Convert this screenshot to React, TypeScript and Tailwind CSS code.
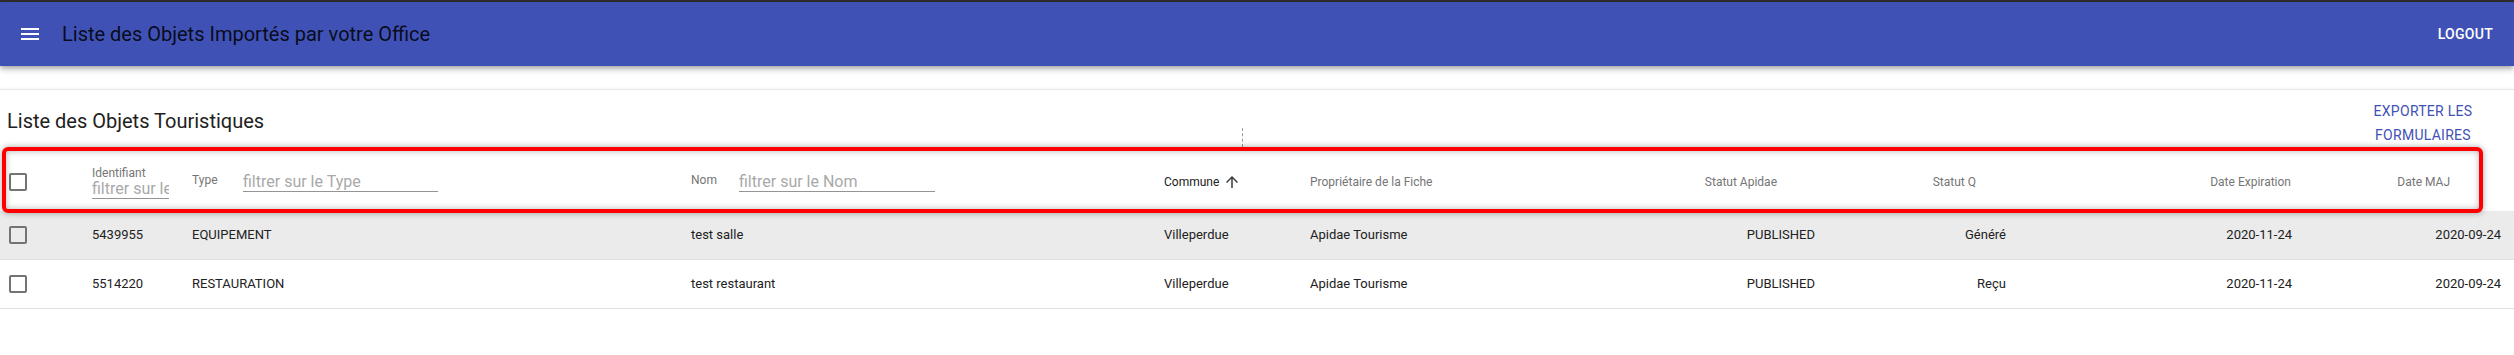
import React from "react";

const cols =
  "grid grid-cols-[92px_100px_499px_473px_146px_390px_115px_191px_286px_209px] pr-[13px]";

function Box() {
  return <div className="ml-[9px] h-[18px] w-[18px] rounded-[2px] border-2 border-[#737373]" />;
}

function Filter({ w, ph }: { w: string; ph: string }) {
  return (
    <input
      readOnly
      placeholder={ph}
      className={`${w} h-[19px] border-b border-[#949494] bg-transparent text-[16px] leading-[18px] text-[#212121] outline-none placeholder:text-[#a9a9a9]`}
    />
  );
}

const rows = [
  {
    id: "5439955",
    type: "EQUIPEMENT",
    nom: "test salle",
    commune: "Villeperdue",
    prop: "Apidae Tourisme",
    apidae: "PUBLISHED",
    q: "Généré",
    exp: "2020-11-24",
    maj: "2020-09-24",
    bg: "bg-[#ebebeb]",
  },
  {
    id: "5514220",
    type: "RESTAURATION",
    nom: "test restaurant",
    commune: "Villeperdue",
    prop: "Apidae Tourisme",
    apidae: "PUBLISHED",
    q: "Reçu",
    exp: "2020-11-24",
    maj: "2020-09-24",
    bg: "bg-white",
  },
];

export default function App() {
  return (
    <div className="h-[355px] w-full overflow-hidden bg-white font-['Roboto',sans-serif]">
      <div className="h-[2px] bg-[#2e2e2e]" />
      <header className="relative z-10 flex h-[64px] items-center bg-[#3f51b5] pl-[18px] pr-[21px] shadow-[0_2px_4px_-1px_rgba(0,0,0,0.2),0_4px_5px_0_rgba(0,0,0,0.14),0_1px_10px_0_rgba(0,0,0,0.12)]">
        <svg width="24" height="24" viewBox="0 0 24 24" fill="#ffffff">
          <path d="M3 18h18v-2H3v2zm0-5h18v-2H3v2zm0-7v2h18V6H3z" />
        </svg>
        <h1 className="ml-[20px] text-[20px] font-normal leading-[24px] text-black/[0.87]">
          Liste des Objets Importés par votre Office
        </h1>
        <span className="ml-auto text-[14px] font-medium uppercase leading-[20px] tracking-[0.02em] text-white">
          Logout
        </span>
      </header>

      <div className="mt-[23px] border-t border-[#e8e8e8] shadow-[0_-1px_2px_rgba(0,0,0,0.04)]">
        <div className="flex h-[57px]">
          <div className="w-[1242px] pl-[7px] pt-[19px]">
            <h2 className="text-[20px] font-normal leading-[24px] text-[#212121]">
              Liste des Objets Touristiques
            </h2>
          </div>
          <div className="mt-[38px] h-[19px] border-l border-dashed border-[#9a9a9a]" />
          <div className="flex-1" />
          <div className="mr-[31px] mt-[9px] w-[120px] text-center text-[14px] font-normal uppercase leading-[24px] tracking-[0.02em] text-[#3f51b5]">
            Exporter les
            <br />
            formulaires
          </div>
        </div>

        <div className="relative">
          <div className={`${cols} h-[64px] items-center pt-[6px] text-[12px] leading-[14px] text-[#757575]`}>
            <div>
              <Box />
            </div>
            <div className="flex flex-col">
              <span className="text-[12px] leading-[14px] text-[#767676]">Identifiant</span>
              <Filter w="w-[77px]" ph="filtrer sur le Identifiant" />
            </div>
            <div className="flex items-center">
              <span className="mb-[4px] w-[51px]">Type</span>
              <Filter w="w-[195px]" ph="filtrer sur le Type" />
            </div>
            <div className="flex items-center">
              <span className="mb-[4px] w-[48px]">Nom</span>
              <Filter w="w-[196px]" ph="filtrer sur le Nom" />
            </div>
            <div className="flex items-center text-[#212121]">
              <span>Commune</span>
              <svg className="ml-[4px]" width="18" height="18" viewBox="0 0 24 24" fill="#3a3a3a">
                <path d="M4 12l1.41 1.41L11 7.83V20h2V7.83l5.58 5.59L20 12l-8-8-8 8z" />
              </svg>
            </div>
            <div>Propriétaire de la Fiche</div>
            <div className="pr-[38px] text-right whitespace-nowrap">Statut Apidae</div>
            <div className="pr-[30px] text-right">Statut Q</div>
            <div className="pr-[1px] text-right">Date Expiration</div>
            <div className="pr-[51px] text-right">Date MAJ</div>
          </div>
          <div className="pointer-events-none absolute left-[2px] top-0 h-[66px] w-[2481px] rounded-[6px] border-[4px] border-[#ff0000] shadow-[0_0_6px_rgba(0,0,0,0.35),inset_0_0_6px_rgba(0,0,0,0.3)]" />
        </div>

        {rows.map((r) => (
          <div
            key={r.id}
            className={`${cols} ${r.bg} h-[49px] items-center border-b border-[#e0e0e0] text-[13px] leading-[16px] text-[#212121]`}
          >
            <div>
              <Box />
            </div>
            <div>{r.id}</div>
            <div>{r.type}</div>
            <div>{r.nom}</div>
            <div>{r.commune}</div>
            <div>{r.prop}</div>
            <div className="text-right">{r.apidae}</div>
            <div className="text-right">{r.q}</div>
            <div className="text-right">{r.exp}</div>
            <div className="text-right">{r.maj}</div>
          </div>
        ))}
      </div>
    </div>
  );
}
